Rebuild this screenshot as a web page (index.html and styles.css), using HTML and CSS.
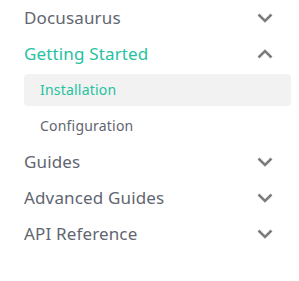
FILE: index.html
```html
<html>
  <head>
    <link rel="stylesheet" href="styles.css">
    <title>Docs menu</title>
  </head>
  <body>
    <nav class="menu">
      <ul class="menu-list">
        <li class="menu-item">
          <a class="menu-link">Docusaurus
            <svg class="caret" viewBox="0 0 16 10"><path d="M1.5 1.5 8 8 14.5 1.5" /></svg>
          </a>
        </li>
        <li class="menu-item">
          <a class="menu-link active">Getting Started
            <svg class="caret" viewBox="0 0 16 10"><path d="M1.5 8.5 8 2 14.5 8.5" /></svg>
          </a>
          <ul class="sub-list">
            <li class="menu-item"><a class="sub-link current">Installation</a></li>
            <li class="menu-item"><a class="sub-link">Configuration</a></li>
          </ul>
        </li>
        <li class="menu-item">
          <a class="menu-link">Guides
            <svg class="caret" viewBox="0 0 16 10"><path d="M1.5 1.5 8 8 14.5 1.5" /></svg>
          </a>
        </li>
        <li class="menu-item">
          <a class="menu-link">Advanced Guides
            <svg class="caret" viewBox="0 0 16 10"><path d="M1.5 1.5 8 8 14.5 1.5" /></svg>
          </a>
        </li>
        <li class="menu-item">
          <a class="menu-link">API Reference
            <svg class="caret" viewBox="0 0 16 10"><path d="M1.5 1.5 8 8 14.5 1.5" /></svg>
          </a>
        </li>
      </ul>
    </nav>
  </body>
</html>
```

FILE: styles.css
```css
body {
  margin: 0;
  font-family: "Noto Sans", sans-serif;
  background-color: #fff;
}
.menu {
  padding: 2px 8px 0 12px;
}
.menu-list,
.sub-list {
  list-style: none;
  margin: 0;
  padding: 0;
}
.menu-item + .menu-item,
.sub-list {
  margin-top: 4px;
}
.sub-list {
  padding-left: 12px;
}
.menu-link,
.sub-link {
  display: flex;
  align-items: center;
  justify-content: space-between;
  border-radius: 4px;
  color: #5f6670;
  font-weight: 400;
  cursor: pointer;
}
.menu-link {
  padding: 6px 18px 6px 12px;
  font-size: 17px;
  line-height: 20px;
  letter-spacing: 0.15px;
}
.sub-link {
  padding: 6px 16px;
  font-size: 14px;
  line-height: 20px;
  letter-spacing: 0.2px;
}
.active,
.current {
  color: #25c2a0;
}
.current {
  background-color: #f2f2f2;
}
.caret {
  width: 16px;
  height: 10px;
  fill: none;
  stroke: #7d7d7d;
  stroke-width: 2.6;
}
```
